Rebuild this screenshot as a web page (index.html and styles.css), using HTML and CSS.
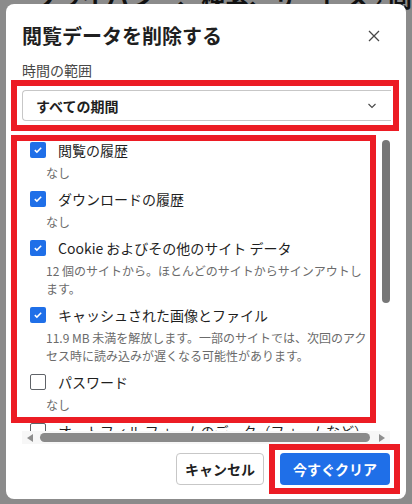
FILE: index.html
```html
<!DOCTYPE html>
<html lang="ja">
<head>
    <meta charset="UTF-8">
    <meta name="viewport" content="width=device-width, initial-scale=1.0">
    <title>閲覧データを削除する</title>
    <link rel="stylesheet" href="styles.css">
</head>
<body>

<div class="page">
    <h1 class="page-title">プライバシー、検索、サービス › 閲覧データ</h1>
</div>

<div class="dialog">
    <div class="dialog-head">
        <h2>閲覧データを削除する</h2>
        <button class="close-btn" type="button">
            <svg width="12" height="12" viewBox="0 0 12 12"><path d="M1 1L11 11M11 1L1 11" stroke="#474747" stroke-width="1.3"/></svg>
        </button>
    </div>

    <label class="field-label">時間の範囲</label>
    <div class="select">
        <span>すべての期間</span>
        <svg width="10" height="6" viewBox="0 0 10 6"><path d="M1.5 1l3.5 3.5 3.5-3.5" fill="none" stroke="#474747" stroke-width="1.1"/></svg>
    </div>

    <div class="scroll-box">
        <div class="scroll-view">
            <ul class="options">
                <li class="option">
                    <div class="opt-row"><span class="check on"><svg width="16" height="16" viewBox="0 0 16 16"><path d="M4.8 8.1l2.1 2 4.3-4.4" fill="none" stroke="#fff" stroke-width="1.5"/></svg></span>閲覧の履歴</div>
                    <p class="opt-desc">なし</p>
                </li>
                <li class="option">
                    <div class="opt-row"><span class="check on"><svg width="16" height="16" viewBox="0 0 16 16"><path d="M4.8 8.1l2.1 2 4.3-4.4" fill="none" stroke="#fff" stroke-width="1.5"/></svg></span>ダウンロードの履歴</div>
                    <p class="opt-desc">なし</p>
                </li>
                <li class="option">
                    <div class="opt-row"><span class="check on"><svg width="16" height="16" viewBox="0 0 16 16"><path d="M4.8 8.1l2.1 2 4.3-4.4" fill="none" stroke="#fff" stroke-width="1.5"/></svg></span>Cookie およびその他のサイト データ</div>
                    <p class="opt-desc">12 個のサイトから。ほとんどのサイトからサインアウトします。</p>
                </li>
                <li class="option">
                    <div class="opt-row"><span class="check on"><svg width="16" height="16" viewBox="0 0 16 16"><path d="M4.8 8.1l2.1 2 4.3-4.4" fill="none" stroke="#fff" stroke-width="1.5"/></svg></span>キャッシュされた画像とファイル</div>
                    <p class="opt-desc">11.9 MB 未満を解放します。一部のサイトでは、次回のアクセス時に読み込みが遅くなる可能性があります。</p>
                </li>
                <li class="option">
                    <div class="opt-row"><span class="check off"></span>パスワード</div>
                    <p class="opt-desc">なし</p>
                </li>
                <li class="option">
                    <div class="opt-row"><span class="check off"></span>オートフィル フォームのデータ（フォームなど）</div>
                    <p class="opt-desc">なし</p>
                </li>
            </ul>
        </div>
        <div class="v-scrollbar"><div class="v-thumb"></div></div>
    </div>

    <div class="h-scrollbar">
        <span class="arrow arrow-left"></span>
        <div class="h-thumb"></div>
        <span class="arrow arrow-right"></span>
    </div>

    <div class="dialog-actions">
        <button class="btn" type="button">キャンセル</button>
        <button class="btn btn-primary" type="button">今すぐクリア</button>
    </div>

    <div class="mark mark-range"></div>
    <div class="mark mark-list"></div>
    <div class="mark mark-clear"></div>
</div>

</body>
</html>
```

FILE: styles.css
```css
* {
    box-sizing: border-box;
}

body {
    margin: 0;
    height: 504px;
    overflow: hidden;
    position: relative;
    background-color: #8b8b8b;
    font-family: "Noto Sans CJK JP", "Noto Sans", sans-serif;
    color: #1f1f1f;
}

.page-title {
    margin: -15px 0 0 34px;
    font-size: 24px;
    line-height: 24px;
    font-weight: 700;
    color: #111;
    white-space: nowrap;
}

.dialog {
    position: absolute;
    top: 4px;
    left: 6px;
    width: 400px;
    height: 495px;
    background-color: #fff;
    border-radius: 8px;
    padding: 18px 15px 14px 16px;
    display: flex;
    flex-direction: column;
}

.dialog-head {
    display: flex;
    align-items: center;
    justify-content: space-between;
    height: 28px;
    padding-right: 5px;
}

.dialog-head h2 {
    margin: 0;
    font-size: 20px;
    line-height: 28px;
    font-weight: 700;
}

.close-btn {
    width: 24px;
    height: 24px;
    padding: 0;
    border: none;
    background: none;
    display: flex;
    align-items: center;
    justify-content: center;
}

.field-label {
    display: block;
    margin-top: 10px;
    font-size: 14px;
    line-height: 20px;
    color: #474747;
}

.select {
    margin-top: 10px;
    height: 31px;
    display: flex;
    align-items: center;
    justify-content: space-between;
    border: 1px solid #c7c7c7;
    border-right: none;
    border-radius: 4px 0 0 4px;
    padding: 0 14px 0 13px;
    font-size: 14px;
    font-weight: 700;
}

.scroll-box {
    margin-top: 11px;
    height: 299px;
    display: flex;
    overflow: hidden;
}

.scroll-view {
    flex: 1;
    overflow: hidden;
    padding: 5px 0 0 8px;
}

.v-scrollbar {
    width: 9px;
    padding: 8px 1px 0 0;
}

.v-thumb {
    width: 8px;
    height: 163px;
    background-color: #777;
    border-radius: 4px;
}

.options {
    list-style: none;
    margin: 0;
    padding: 0;
}

.option {
    padding-bottom: 4px;
}

.opt-row {
    display: flex;
    align-items: center;
    gap: 12px;
    height: 26px;
    font-size: 14px;
    white-space: nowrap;
}

.check {
    width: 16px;
    height: 16px;
    flex-shrink: 0;
    border-radius: 2px;
    display: flex;
}

.check.on {
    background-color: #1f6fe8;
}

.check.off {
    border: 1.5px solid #5f6368;
}

.opt-desc {
    margin: 1px 0 0 16px;
    width: 324px;
    font-size: 12px;
    line-height: 18px;
    color: #6b6b6b;
}

.h-scrollbar {
    height: 13px;
    margin-right: 1px;
    padding: 0 5px;
    display: flex;
    align-items: center;
    background-color: #f7f7f7;
}

.arrow {
    width: 0;
    height: 0;
    border-top: 4px solid transparent;
    border-bottom: 4px solid transparent;
}

.arrow-left {
    border-right: 6px solid #8e8e8e;
    margin-right: 7px;
}

.arrow-right {
    border-left: 6px solid #8e8e8e;
    margin-left: 9px;
}

.h-thumb {
    flex: 1;
    height: 9px;
    background-color: #8a8a8a;
    border-radius: 5px;
}

.dialog-actions {
    margin-top: 9px;
    margin-right: 1px;
    display: flex;
    justify-content: flex-end;
    gap: 16px;
}

.btn {
    height: 32px;
    padding: 0 8px;
    border: 1px solid #c7c7c7;
    border-radius: 4px;
    background-color: #fff;
    color: #1f1f1f;
    font-family: inherit;
    font-size: 14px;
    font-weight: 700;
}

.btn-primary {
    padding: 0 13px;
    border: none;
    background-color: #1f6fe8;
    color: #fff;
}

.mark {
    position: absolute;
    border: 6px solid #ec1c24;
}

.mark-range {
    left: 5px;
    top: 76px;
    width: 388px;
    height: 51px;
}

.mark-list {
    left: 5px;
    top: 131px;
    width: 365px;
    height: 288px;
}

.mark-clear {
    left: 263px;
    top: 440px;
    width: 131px;
    height: 50px;
}
```
